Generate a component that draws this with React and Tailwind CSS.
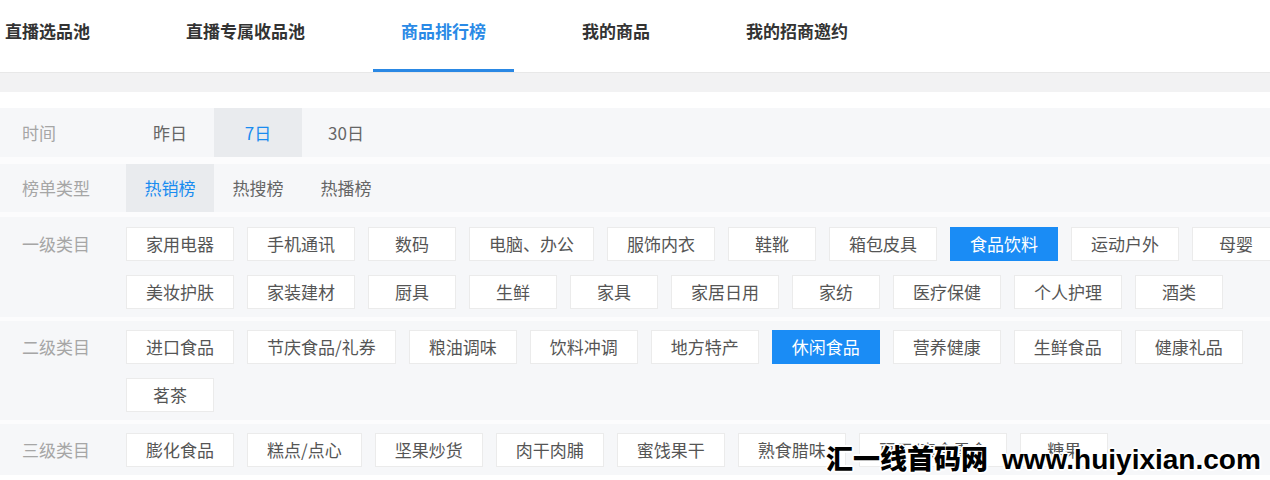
const tabs = ["直播选品池", "直播专属收品池", "商品排行榜", "我的商品", "我的招商邀约"]

const level1 = [
  "家用电器", "手机通讯", "数码", "电脑、办公", "服饰内衣", "鞋靴", "箱包皮具", "食品饮料", "运动户外", "母婴",
  "美妆护肤", "家装建材", "厨具", "生鲜", "家具", "家居日用", "家纺", "医疗保健", "个人护理", "酒类",
]
const level2 = ["进口食品", "节庆食品/礼券", "粮油调味", "饮料冲调", "地方特产", "休闲食品", "营养健康", "生鲜食品", "健康礼品", "茗茶"]
const level3 = ["膨化食品", "糕点/点心", "坚果炒货", "肉干肉脯", "蜜饯果干", "熟食腊味", "豆干/素食零食", "糖果"]

function OptionRow({ label, options, active, className }) {
  return (
    <div className={"flex h-[48px] items-stretch bg-[#f6f7f9] " + className}>
      <div className="w-[126px] pl-[22px] flex items-center text-[#a6a6a6]">{label}</div>
      {options.map((o) => (
        <div
          key={o}
          className={
            o === active
              ? "w-[88px] flex items-center justify-center bg-[#e9ebee] text-[#1a8cf0]"
              : "w-[88px] flex items-center justify-center text-[#666]"
          }>
          {o}
        </div>
      ))}
    </div>
  )
}

function CategoryRow({ label, items, active, className }) {
  return (
    <div className={"flex bg-[#f6f7f9] pb-[8px] " + className}>
      <div className="w-[126px] pl-[22px] h-[34px] flex items-center text-[#a6a6a6] shrink-0">{label}</div>
      <div className="w-[1180px] flex flex-wrap gap-x-[13px] gap-y-[14px]">
        {items.map((it) => (
          <div
            key={it}
            className={
              it === active
                ? "h-[34px] min-w-[88px] px-[19px] flex items-center justify-center border border-[#1a8cf5] bg-[#1a8cf5] text-white"
                : "h-[34px] min-w-[88px] px-[19px] flex items-center justify-center border border-[#ebebeb] bg-white text-[#555]"
            }>
            {it}
          </div>
        ))}
      </div>
    </div>
  )
}

export default function App() {
  return (
    <div className="relative w-full h-[480px] overflow-hidden bg-white font-['Noto_Sans_CJK_SC','Microsoft_YaHei',sans-serif] text-[17px]">
      <div className="w-[1310px]">

        {/* tabs */}
        <div className="h-[73px] border-b border-[#e8e8e8]">
          <div className="flex gap-[40px] ml-[-23px]">
            {tabs.map((t) => (
              <div
                key={t}
                className={
                  "relative h-[72px] px-[28px] pt-[20px] leading-[22px] font-bold " +
                  (t === "商品排行榜" ? "text-[#2a8ae6]" : "text-[#333]")
                }>
                {t}
                {t === "商品排行榜" && (
                  <div className="absolute left-0 right-0 bottom-0 h-[3px] bg-[#2a88e4]" />
                )}
              </div>
            ))}
          </div>
        </div>

        <div className="h-[19px] bg-[#f2f2f3]" />
        <div className="h-[16px] bg-white" />

        {/* filters */}
        <div className="bg-[#fcfcfd]">
          <OptionRow label="时间" options={["昨日", "7日", "30日"]} active="7日" className="h-[49px]" />
          <OptionRow label="榜单类型" options={["热销榜", "热搜榜", "热播榜"]} active="热销榜" className="mt-[7px]" />
          <CategoryRow label="一级类目" items={level1} active="食品饮料" className="mt-[5px] pt-[10px]" />
          <CategoryRow label="二级类目" items={level2} active="休闲食品" className="mt-[4px] pt-[9px]" />
          <CategoryRow label="三级类目" items={level3} active="" className="mt-[4px] pt-[9px]" />
        </div>
      </div>

      {/* watermark */}
      <div className="absolute left-[826px] top-[444px] flex items-baseline leading-none text-black [text-shadow:1px_1px_0_#fff,-1px_-1px_0_#fff,1px_-1px_0_#fff,-1px_1px_0_#fff,0_2px_0_#fff,0_-2px_0_#fff,2px_0_0_#fff,-2px_0_0_#fff]">
        <span className="text-[27px] font-black font-['Noto_Sans_CJK_SC',sans-serif]">汇一线首码网</span>
        <span className="ml-[14px] text-[28px] font-bold font-['Liberation_Sans',sans-serif]">www.huiyixian.com</span>
      </div>
    </div>
  )
}
